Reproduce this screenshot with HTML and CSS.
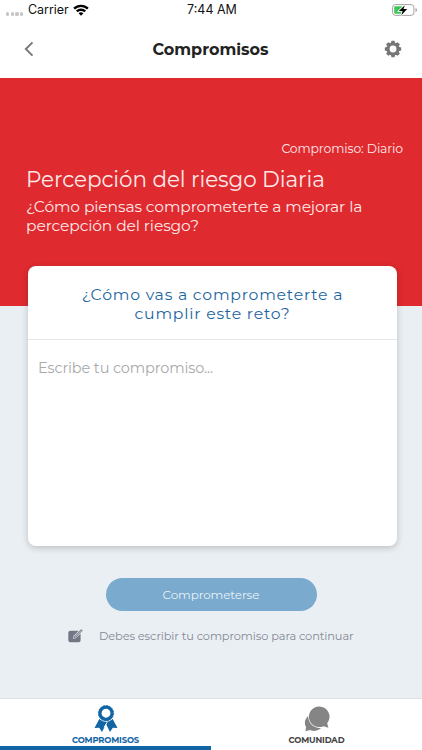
FILE: index.html
```html
<!DOCTYPE html>
<html lang="es">
<head>
<meta charset="utf-8">
<meta name="viewport" content="width=device-width, initial-scale=1">
<title>Compromisos</title>
<link rel="stylesheet" href="styles.css">
</head>
<body>
<div class="app">
  <div class="status">
    <div class="carrier">
      <span class="dots"><i></i><i></i><i></i><i></i></span>
      <span class="carrier-name">Carrier</span>
      <svg class="wifi" width="16" height="12" viewBox="0 0 16 12"><path d="M.3 3.8a11 11 0 0 1 15.4 0l-1.6 1.7a8.7 8.7 0 0 0-12.2 0zM3 6.6a7.2 7.2 0 0 1 10 0l-1.6 1.7a4.9 4.9 0 0 0-6.8 0zM5.6 9.3a3.5 3.5 0 0 1 4.8 0L8 11.7z"/></svg>
    </div>
    <span class="time">7:44 AM</span>
    <svg class="battery" width="26" height="12" viewBox="0 0 26 12"><rect x=".6" y=".6" width="21.3" height="10.8" rx="2.8" fill="#fff" stroke="#a4a4a4"/><path d="M23.5 4v4q1.6-.5 1.6-2t-1.6-2" fill="#a4a4a4"/><rect x="2.2" y="2.2" width="8" height="7.6" rx="1.2" fill="#3ec65c"/><path d="M12.8 1.2 6.9 7h3.7l-1.3 4.2L15.2 5h-3.7z" fill="#000" stroke="#fff" stroke-width="1.6" paint-order="stroke"/></svg>
  </div>
  <header class="nav">
    <svg class="back" width="10" height="16" viewBox="0 0 10 16"><path d="M8.500 1.300 1.800 8l6.700 6.700" fill="none" stroke="#777" stroke-width="1.900"/></svg>
    <h1>Compromisos</h1>
    <svg class="gear" width="18" height="18" viewBox="-9 -9 18 18"><g fill="#777"><path d="M-2.300-5.500-1.500-8.200h3l.8 2.700v11l-.8 2.700h-3l-.8-2.700z"/><path transform="rotate(45)" d="M-2.300-5.500-1.500-8.200h3l.8 2.700v11l-.8 2.700h-3l-.8-2.700z"/><path transform="rotate(90)" d="M-2.300-5.500-1.500-8.200h3l.8 2.700v11l-.8 2.700h-3l-.8-2.700z"/><path transform="rotate(135)" d="M-2.300-5.500-1.500-8.200h3l.8 2.700v11l-.8 2.700h-3l-.8-2.700z"/><circle r="6.500"/></g><circle r="3.400" fill="#fff"/></svg>
  </header>
  <section class="hero">
    <p class="frequency">Compromiso: Diario</p>
    <h2>Percepción del riesgo Diaria</h2>
    <p class="question">¿Cómo piensas comprometerte a mejorar la<br>percepción del riesgo?</p>
  </section>
  <main class="content">
    <section class="card">
      <h3>¿Cómo vas a comprometerte a<br>cumplir este reto?</h3>
      <div class="entry"><span>Escribe tu compromiso...</span></div>
    </section>
    <button class="submit" type="button"><span>Comprometerse</span></button>
    <p class="note">
      <svg width="15" height="14" viewBox="0 0 15 14"><path d="M2.500 1.800h8.200L5.500 7 5 9.700l2.700-.5L12.600 4.500v6.700q0 2-2 2H2.300q-2 0-2-2V3.800q0-2 2.200-2z" fill="#737784"/><path d="m6 8.800.5-1.600L13.300.6l.9.900-6.600 6.700z" fill="#b9bdc6" stroke="#737784" stroke-width=".9"/></svg>
      <span>Debes escribir tu compromiso para continuar</span>
    </p>
  </main>
  <nav class="tabs">
    <div class="tab active">
      <svg width="24" height="27" viewBox="0 0 24 27"><path d="M5.300 14 .5 23l4.700-.2L8 27l4-8 4 8 2.800-4.200 4.700.2-4.800-9z" fill="#1265a4"/><circle cx="12" cy="8.500" r="8.500" fill="#fff"/><circle cx="12" cy="8.200" r="6.100" fill="none" stroke="#1265a4" stroke-width="3.300"/><circle cx="12" cy="8.200" r="7.700" fill="none" stroke="#1265a4" stroke-width=".7" stroke-dasharray="2 1"/><path d="m13.200 17.300-3 5" stroke="#fff" stroke-width="1"/></svg>
      <span>COMPROMISOS</span>
    </div>
    <div class="tab">
      <svg width="26" height="26" viewBox="0 0 26 26"><path d="M6 9a8.500 8.500 0 0 0-4 12L1.500 25.200 6 24q6 2.500 11-1.800Q7 21 6 9z" fill="#858585"/><path d="M15.200.5a10.300 10.300 0 1 0 4.200 19.700l5 1.600-1.200-4.600A10.300 10.300 0 0 0 15.200.5z" fill="#858585" stroke="#fff" stroke-width="1.300" paint-order="stroke"/></svg>
      <span>COMUNIDAD</span>
    </div>
  </nav>
</div>
</body>
</html>
```
FILE: styles.css
```css
* { box-sizing: border-box; }
body { margin: 0; font-family: Montserrat, Inter, sans-serif; }
h1, h2, h3, p { margin: 0; font-weight: 400; }
svg { display: block; flex: none; }
span { white-space: nowrap; }

.app { width: 422px; height: 750px; display: flex; flex-direction: column; background: #fff; overflow: hidden; }

.status { height: 20px; display: grid; grid-template-columns: 1fr auto 1fr; align-items: center; padding: 0 4px 0 6px; font: 12.500px/20px Inter, sans-serif; color: #111; }
.carrier { display: flex; align-items: center; }
.dots { display: flex; gap: 1.500px; width: 22px; padding-top: 8px; }
.dots i { width: 3.200px; height: 3.200px; border-radius: 50%; background: #c5c5c5; }
.carrier-name { width: 45px; letter-spacing: -.05px; }
.battery { justify-self: end; }

.nav { height: 58px; display: grid; grid-template-columns: 80px 1fr 80px; align-items: center; padding: 0 20px 0 24px; }
.nav h1 { text-align: center; font-size: 16px; font-weight: 700; color: #222; padding-right: 5px; }
.gear { justify-self: end; }

.hero { height: 228px; flex: none; background: #df2a2f; padding: 61px 19px 0 26px; color: #ffe9e9; white-space: nowrap; }
.frequency { text-align: right; font-size: 12.400px; line-height: 20px; letter-spacing: -.1px; }
.hero h2 { font-size: 21.500px; line-height: 28px; margin-top: 6px; letter-spacing: -.08px; }
.question { font-size: 15.500px; line-height: 19.500px; margin-top: 3.500px; letter-spacing: -.11px; }

.content { flex: 1; background: #eaeff3; display: flex; flex-direction: column; align-items: center; }
.card { width: 369px; height: 280px; margin: -40.500px 0 0 3px; background: #fff; border-radius: 8px; box-shadow: 0 2px 7px rgba(0, 0, 0, .2); }
.card h3 { height: 74px; padding-top: 20.500px; text-align: center; font-size: 15.700px; line-height: 18.500px; color: #1c669f; border-bottom: 1px solid #e7e7e7; letter-spacing: .77px; }
.entry { padding: 18px 10px; font-size: 14.500px; line-height: 20px; letter-spacing: -.12px; color: #a9a9a9; }
.submit { width: 211px; height: 33px; margin-top: 32.500px; border: 0; border-radius: 17px; padding: 0; background: #7aaacd; color: #e7f1f8; font: 400 12px/33px Montserrat, Inter, sans-serif; letter-spacing: -.13px; }
.note { width: 286px; margin-top: 15px; display: flex; align-items: center; gap: 16px; font-size: 11.400px; line-height: 20px; letter-spacing: -.1px; color: #858995; }

.tabs { height: 52px; display: flex; border-top: 1px solid #dde1e5; }
.tab { flex: 1; display: flex; flex-direction: column; align-items: center; padding-top: 7px; font-size: 8.400px; line-height: 12px; font-weight: 700; letter-spacing: -.15px; color: #444; }
.tab.active { padding-top: 6px; color: #1265a4; border-bottom: 4px solid #1265a4; }
.tab span { margin-top: 2px; }
```
